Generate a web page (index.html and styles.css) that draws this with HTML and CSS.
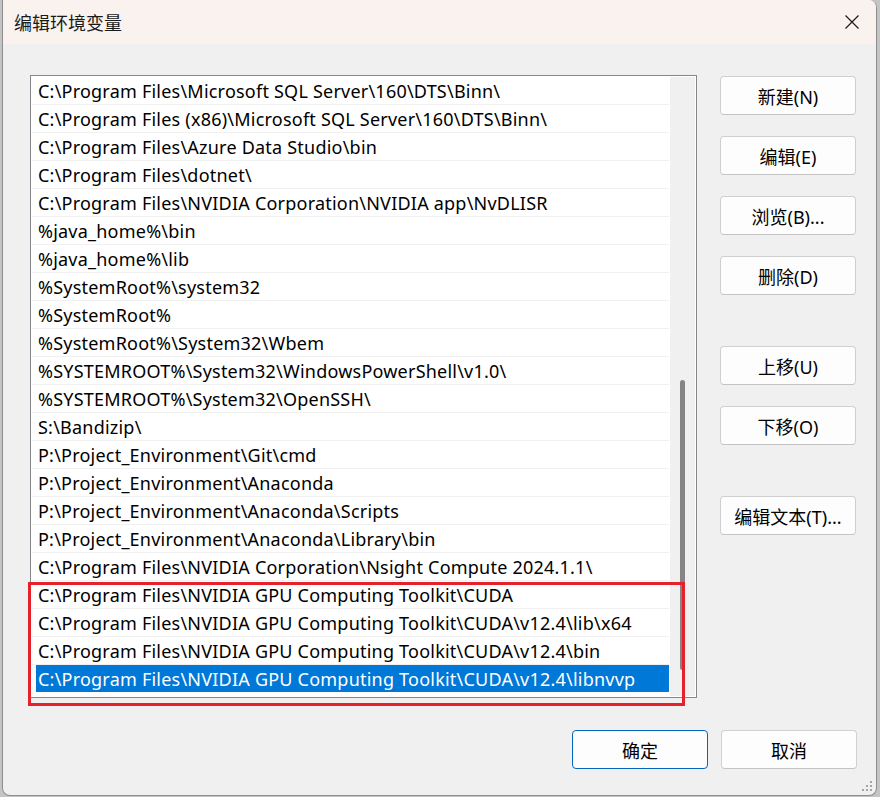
FILE: index.html
```html
<!DOCTYPE html>
<html lang="zh-CN">
<head>
<meta charset="utf-8">
<title>编辑环境变量</title>
<link rel="stylesheet" href="styles.css">
</head>
<body>
<div class="window">
  <div class="titlebar">
    <span class="title">编辑环境变量</span>
    <svg class="close" width="14" height="14" viewBox="0 0 14 14"><path d="M0.5 0.5 L13.5 13.5 M13.5 0.5 L0.5 13.5" stroke="#1b1b1b" stroke-width="1.2" fill="none"/></svg>
  </div>
  <div class="content">
    <div class="main">
      <div class="listbox">
        <div class="rows">
          <div class="row">C:\Program Files\Microsoft SQL Server\160\DTS\Binn\</div>
          <div class="row">C:\Program Files (x86)\Microsoft SQL Server\160\DTS\Binn\</div>
          <div class="row">C:\Program Files\Azure Data Studio\bin</div>
          <div class="row">C:\Program Files\dotnet\</div>
          <div class="row">C:\Program Files\NVIDIA Corporation\NVIDIA app\NvDLISR</div>
          <div class="row">%java_home%\bin</div>
          <div class="row">%java_home%\lib</div>
          <div class="row">%SystemRoot%\system32</div>
          <div class="row">%SystemRoot%</div>
          <div class="row">%SystemRoot%\System32\Wbem</div>
          <div class="row">%SYSTEMROOT%\System32\WindowsPowerShell\v1.0\</div>
          <div class="row">%SYSTEMROOT%\System32\OpenSSH\</div>
          <div class="row">S:\Bandizip\</div>
          <div class="row">P:\Project_Environment\Git\cmd</div>
          <div class="row">P:\Project_Environment\Anaconda</div>
          <div class="row">P:\Project_Environment\Anaconda\Scripts</div>
          <div class="row">P:\Project_Environment\Anaconda\Library\bin</div>
          <div class="row">C:\Program Files\NVIDIA Corporation\Nsight Compute 2024.1.1\</div>
          <div class="row">C:\Program Files\NVIDIA GPU Computing Toolkit\CUDA</div>
          <div class="row">C:\Program Files\NVIDIA GPU Computing Toolkit\CUDA\v12.4\lib\x64</div>
          <div class="row">C:\Program Files\NVIDIA GPU Computing Toolkit\CUDA\v12.4\bin</div>
          <div class="row sel">C:\Program Files\NVIDIA GPU Computing Toolkit\CUDA\v12.4\libnvvp</div>
        </div>
        <div class="scrollbar"><div class="thumb"></div></div>
        <div class="highlight"></div>
      </div>
      <div class="side">
        <button class="btn">新建(N)</button>
        <button class="btn">编辑(E)</button>
        <button class="btn">浏览(B)...</button>
        <button class="btn">删除(D)</button>
        <button class="btn group">上移(U)</button>
        <button class="btn">下移(O)</button>
        <button class="btn group">编辑文本(T)...</button>
      </div>
    </div>
    <div class="footer">
      <button class="btn primary">确定</button>
      <button class="btn">取消</button>
    </div>
  </div>
  <svg class="grip" width="12" height="12" viewBox="0 0 12 12">
    <rect x="8" y="0" width="2" height="2" fill="#a6a6a6"/>
    <rect x="4" y="4" width="2" height="2" fill="#a6a6a6"/>
    <rect x="8" y="4" width="2" height="2" fill="#a6a6a6"/>
    <rect x="0" y="8" width="2" height="2" fill="#a6a6a6"/>
    <rect x="4" y="8" width="2" height="2" fill="#a6a6a6"/>
    <rect x="8" y="8" width="2" height="2" fill="#a6a6a6"/>
  </svg>
</div>
</body>
</html>
```
FILE: styles.css
```css
html, body {
  margin: 0;
  padding: 0;
}
body {
  width: 880px;
  height: 797px;
  overflow: hidden;
  background: #c4c4c4;
  font-family: "Noto Sans", "Noto Sans CJK SC", sans-serif;
  color: #000;
}
.window {
  position: relative;
  box-sizing: border-box;
  margin-left: 2px;
  width: 875px;
  height: 796px;
  background: #f0f0f0;
  border: 1px solid #8e8e8e;
  border-top: 0;
  border-radius: 0 8px 8px 8px;
  overflow: hidden;
}
.titlebar {
  height: 44px;
  background: #f9f2ee;
  display: flex;
  align-items: center;
  justify-content: space-between;
  padding: 0 17px 0 11px;
}
.title {
  font-family: "Noto Sans CJK SC", sans-serif;
  font-size: 18px;
  color: #1a1a1a;
  padding-bottom: 1px;
}
.close {
  display: block;
  margin-bottom: 1px;
}
.content {
  padding: 31px 19px 0 27px;
}
.main {
  display: flex;
  align-items: flex-start;
  gap: 23px;
}
.listbox {
  position: relative;
  box-sizing: border-box;
  width: 667px;
  height: 623px;
  background: #fff;
  border: 1px solid #86878c;
  display: flex;
}
.rows {
  width: 639px;
  padding-top: 1px;
}
.row {
  box-sizing: border-box;
  height: 28px;
  margin: 0 1px;
  padding: 1px 0 0 6px;
  border-bottom: 1px solid #f0f0f0;
  font-size: 18px;
  letter-spacing: 0.22px;
  line-height: 26px;
  white-space: nowrap;
}
.row.sel {
  margin-left: 5px;
  padding-left: 2px;
  background: #0078d7;
  color: #fff;
  border-bottom-color: #fff;
  background-clip: padding-box;
}
.scrollbar {
  width: 25px;
  margin: 1px 1px 1px 0;
  background: #f0f0f0;
}
.thumb {
  margin: 303px 0 0 10px;
  width: 5px;
  height: 290px;
  border-radius: 3px;
  background: #858585;
}
.highlight {
  position: absolute;
  left: -3px;
  top: 506px;
  width: 657px;
  height: 124px;
  box-sizing: border-box;
  border: 3px solid #e6212a;
}
.side {
  display: flex;
  flex-direction: column;
  gap: 21px;
  margin-top: 1px;
}
.btn {
  box-sizing: border-box;
  width: 136px;
  height: 39px;
  padding: 0;
  background: #fdfdfd;
  border: 1px solid #d0d0d0;
  border-bottom-color: #c4c4c4;
  border-radius: 4px;
  font-family: "Noto Sans", "Noto Sans CJK SC", sans-serif;
  font-size: 18px;
  color: #000;
}
.btn.group {
  margin-top: 30px;
}
.btn.primary {
  border: 1px solid #0067c0;
}
.footer {
  display: flex;
  justify-content: flex-end;
  gap: 13px;
  margin-top: 32px;
}
.grip {
  position: absolute;
  right: 2px;
  bottom: 2px;
}
```
